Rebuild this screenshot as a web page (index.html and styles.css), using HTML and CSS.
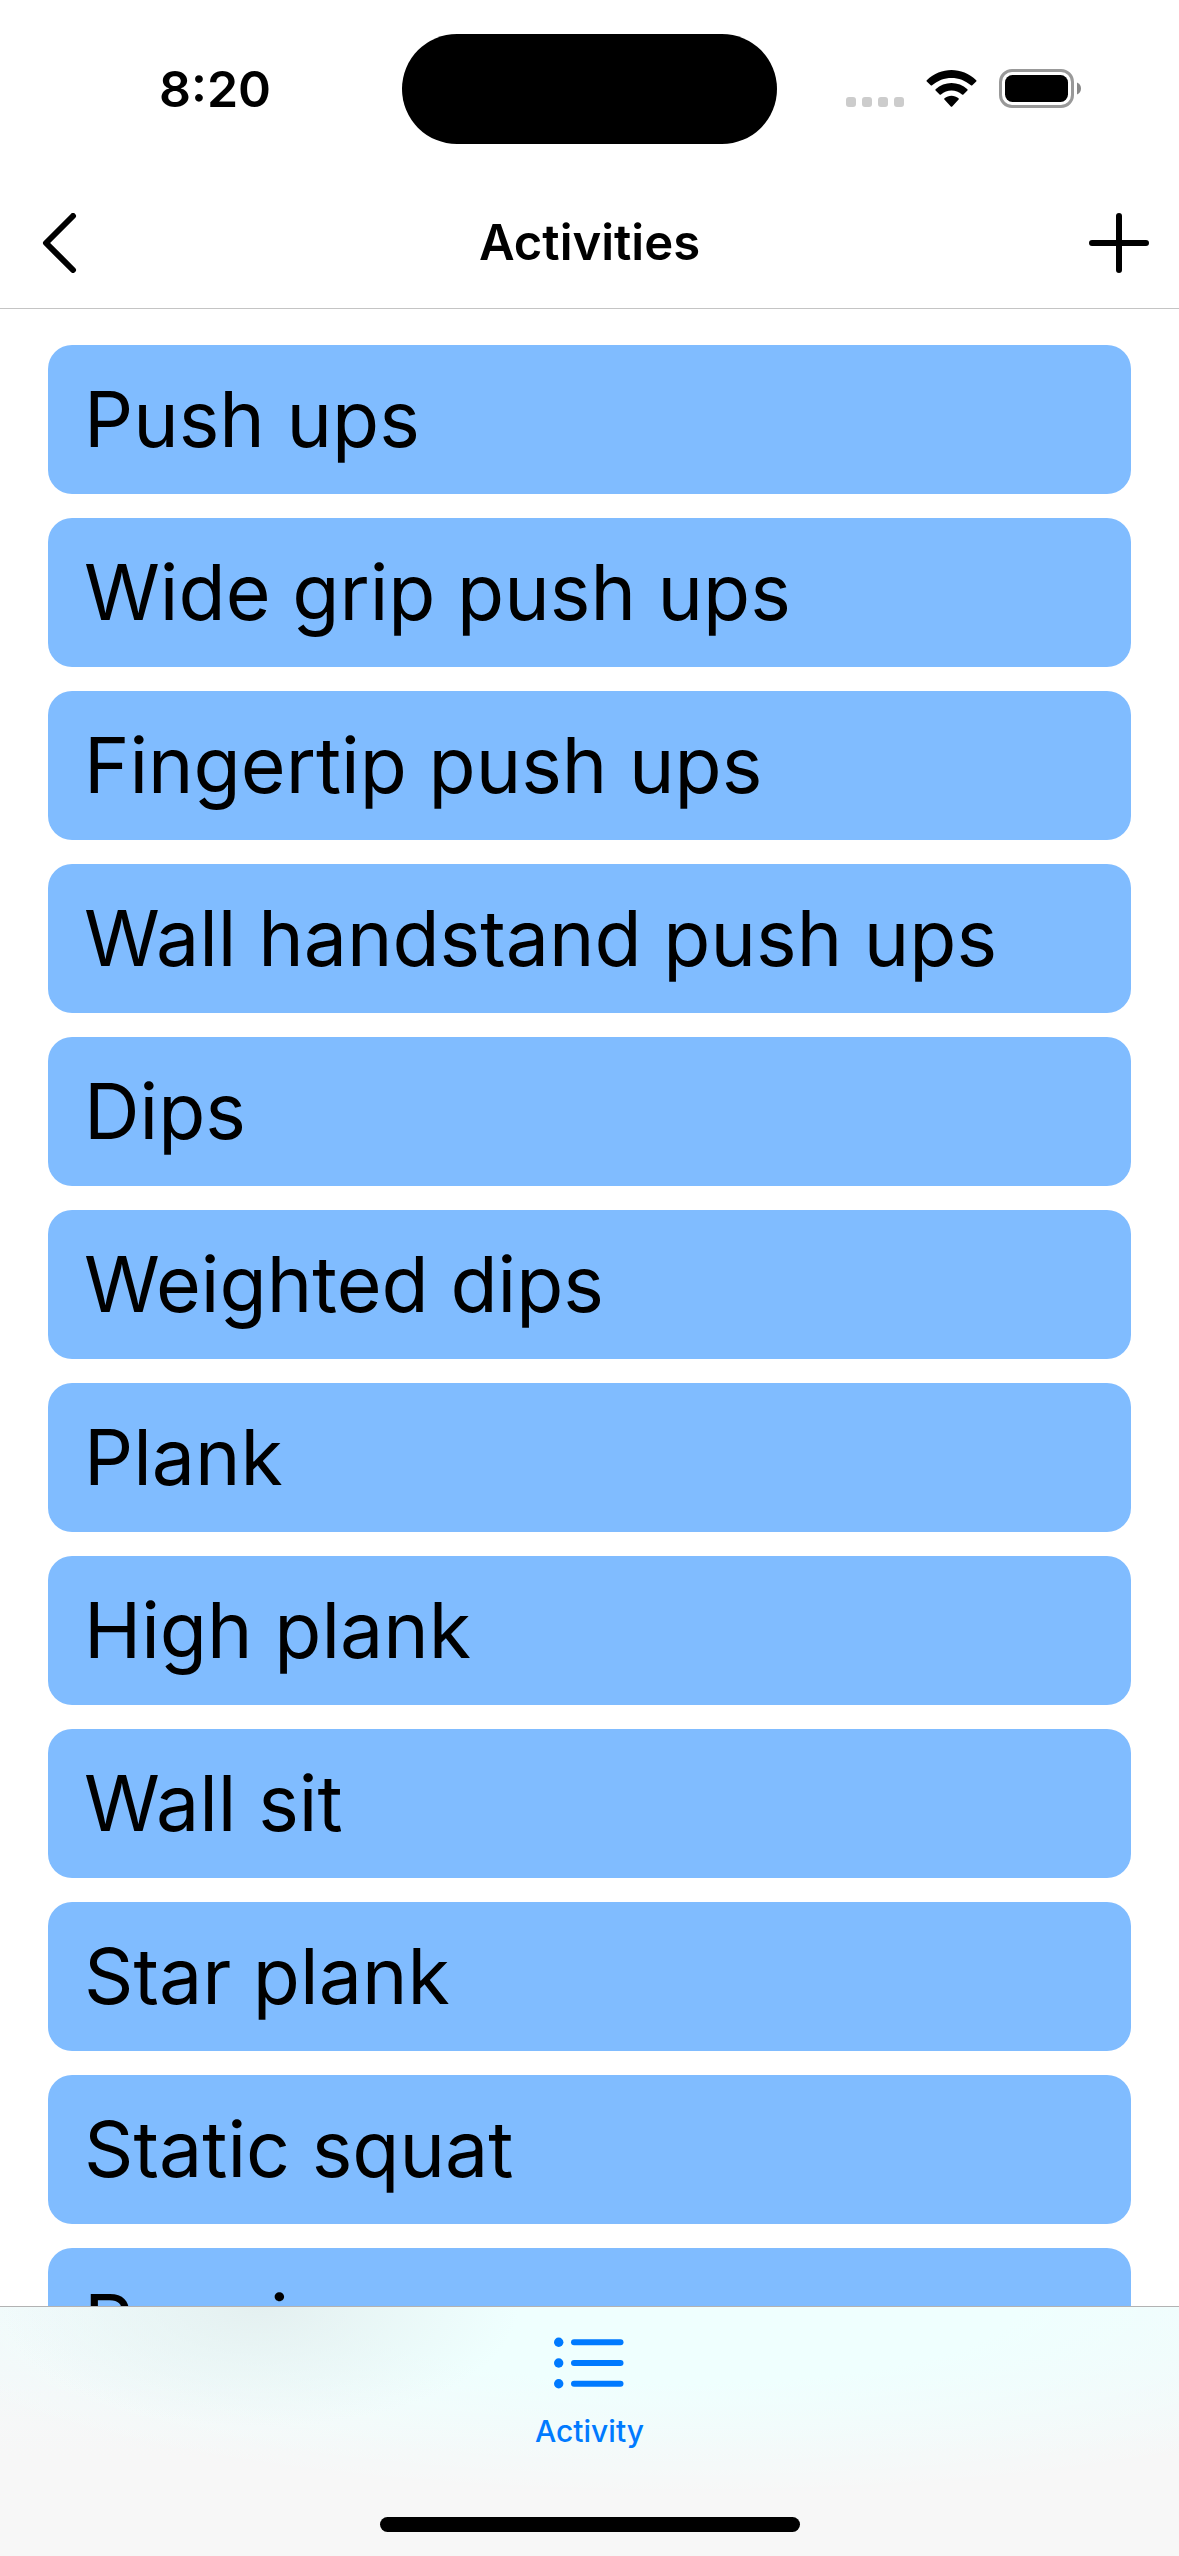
FILE: index.html
```html
<!DOCTYPE html>
<html lang="en">
<head>
<meta charset="utf-8">
<meta name="viewport" content="width=device-width, initial-scale=1">
<title>Activities</title>
<link rel="stylesheet" href="styles.css">
</head>
<body>
<div class="app">
  <div class="status">
    <time class="status-time">8:20</time>
    <div class="island"></div>
    <div class="status-icons">
      <svg class="cellular" width="58" height="38" viewBox="0 0 58 38" fill="#ccc" aria-hidden="true">
        <rect x="0" y="27" width="10" height="10" rx="3"/>
        <rect x="16" y="27" width="10" height="10" rx="3"/>
        <rect x="32" y="27" width="10" height="10" rx="3"/>
        <rect x="48" y="27" width="10" height="10" rx="3"/>
      </svg>
      <svg class="wifi" width="51" height="38" viewBox="0 0 51 38" aria-hidden="true">
        <path d="M.8 10.200C15-3.400 36-3.400 50.200 10.200Q50.800 10.900 50.200 11.500L46.300 15.300Q45.600 15.900 44.900 15.300C34 5.400 17 5.400 6.100 15.300Q5.400 15.900 4.700 15.300L.8 11.500Q.2 10.900.8 10.200Z"/>
        <path d="M9.600 19.200C18.500 10.800 32.500 10.800 41.400 19.200Q42 19.900 41.400 20.500L37.400 24.400Q36.700 25 36 24.400C30 19.200 21 19.200 15 24.400Q14.300 25 13.600 24.400L9.600 20.500Q9 19.900 9.600 19.200Z"/>
        <path d="M18.500 28.200C22.500 24.800 28.500 24.800 32.500 28.200Q33.300 28.900 32.600 29.600L26.200 36.400Q25.500 37.100 24.800 36.400L18.400 29.600Q17.700 28.900 18.500 28.200Z"/>
      </svg>
      <svg class="battery" width="83" height="39" viewBox="0 0 83 39" aria-hidden="true">
        <rect x="1.500" y="1.500" width="72" height="36" rx="11.500" fill="none" stroke="#999" stroke-width="3"/>
        <rect x="6" y="6" width="63" height="27" rx="7.500"/>
        <path d="M78 13.500C80.500 14.500 82 16.800 82 19.500S80.500 24.500 78 25.500Z" fill="#888"/>
      </svg>
    </div>
  </div>

  <header class="nav">
    <button class="nav-button" type="button" aria-label="Back">
      <svg width="60" height="60" viewBox="0 0 60 60" fill="none" stroke="#000" stroke-width="6" stroke-linecap="round" stroke-linejoin="round" aria-hidden="true"><path d="M43 3 16 30 43 57"/></svg>
    </button>
    <h1 class="nav-title">Activities</h1>
    <button class="nav-button nav-add" type="button" aria-label="Add activity">
      <svg width="60" height="60" viewBox="0 0 60 60" fill="none" stroke="#000" stroke-width="6" stroke-linecap="round" aria-hidden="true"><path d="M30 3V57M3 30H57"/></svg>
    </button>
  </header>

  <main class="content">
    <ul class="list">
      <li><button class="card" type="button">Push ups</button></li>
      <li><button class="card" type="button">Wide grip push ups</button></li>
      <li><button class="card" type="button">Fingertip push ups</button></li>
      <li><button class="card" type="button">Wall handstand push ups</button></li>
      <li><button class="card" type="button">Dips</button></li>
      <li><button class="card" type="button">Weighted dips</button></li>
      <li><button class="card" type="button">Plank</button></li>
      <li><button class="card" type="button">High plank</button></li>
      <li><button class="card" type="button">Wall sit</button></li>
      <li><button class="card" type="button">Star plank</button></li>
      <li><button class="card" type="button">Static squat</button></li>
      <li><button class="card" type="button">Running</button></li>
    </ul>
  </main>

  <nav class="tabs">
    <a class="tab" href="#activity" aria-current="page">
      <svg width="72" height="52" viewBox="0 0 72 52" fill="#007aff" aria-hidden="true">
        <circle cx="4.700" cy="5.300" r="4.700"/><rect x="17" y="2.300" width="52.500" height="6" rx="3"/>
        <circle cx="4.700" cy="26" r="4.700"/><rect x="17" y="23" width="52.500" height="6" rx="3"/>
        <circle cx="4.700" cy="46.700" r="4.700"/><rect x="17" y="43.700" width="52.500" height="6" rx="3"/>
      </svg>
      <span>Activity</span>
    </a>
    <div class="home-indicator"></div>
  </nav>
</div>
</body>
</html>
```
FILE: styles.css
```css
* {
  box-sizing: border-box;
}

body {
  margin: 0;
  background: #fff;
  color: #000;
  font-family: Inter, "Liberation Sans", sans-serif;
}

button {
  border: 0;
  padding: 0;
  background: none;
  color: inherit;
  font: inherit;
}

svg {
  display: block;
}

.app {
  display: flex;
  flex-direction: column;
  height: 100vh;
}

.status {
  display: grid;
  grid-template-columns: 1fr 375px 1fr;
  align-items: center;
  flex: none;
  height: 177px;
  padding: 0 28px;
}

.status-time {
  font-size: 50px;
  font-weight: 600;
  line-height: 60px;
  text-align: center;
}

.island {
  height: 110px;
  border-radius: 55px;
  background: #000;
}

.status-icons {
  display: flex;
  align-items: center;
  justify-content: center;
  gap: 22px;
}

.nav {
  display: grid;
  grid-template-columns: 1fr auto 1fr;
  align-items: center;
  flex: none;
  height: 132px;
  padding: 0 30px;
  border-bottom: 1px solid #c4c4c4;
}

.nav-button {
  justify-self: start;
}

.nav-add {
  justify-self: end;
}

.nav-title {
  margin: 0;
  font-size: 49px;
  font-weight: 600;
  line-height: 60px;
}

.content {
  flex: 1;
  min-height: 0;
  overflow-y: auto;
  scrollbar-width: none;
}

.list {
  display: flex;
  flex-direction: column;
  gap: 24px;
  margin: 0;
  padding: 36px 48px;
  list-style: none;
}

.card {
  display: block;
  width: 100%;
  padding: 24px 36px;
  border-radius: 24px;
  background: #80bcff;
  font-size: 77px;
  line-height: 101px;
  text-align: left;
}

.tabs {
  display: flex;
  flex-direction: column;
  align-items: center;
  justify-content: space-between;
  flex: none;
  height: 250px;
  padding: 30px 0 24px;
  border-top: 1px solid #b2b2b2;
  background:
    radial-gradient(ellipse 22% 48% at 22% 0, #e4f0f0, #e4f0f000),
    radial-gradient(ellipse 70% 76% at 58% 0, #effffe 40%, #effffe00),
    linear-gradient(#f2f9fa, #f7f7f7 60%);
}

.tab {
  display: flex;
  flex-direction: column;
  align-items: center;
  gap: 24px;
  color: #007aff;
  font-size: 30px;
  font-weight: 500;
  line-height: 36px;
  text-decoration: none;
}

.home-indicator {
  width: 420px;
  height: 15px;
  border-radius: 8px;
  background: #000;
}
```
